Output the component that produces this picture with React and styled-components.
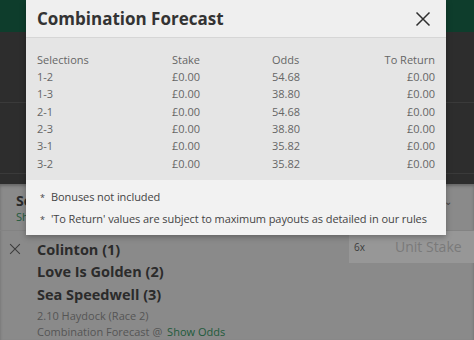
import React from "react"
import styled, { createGlobalStyle } from "styled-components"

const rows = [
  ["1-2", "£0.00", "54.68", "£0.00"],
  ["1-3", "£0.00", "38.80", "£0.00"],
  ["2-1", "£0.00", "54.68", "£0.00"],
  ["2-3", "£0.00", "38.80", "£0.00"],
  ["3-1", "£0.00", "35.82", "£0.00"],
  ["3-2", "£0.00", "35.82", "£0.00"],
]

const CloseIcon = ({ size = 16, color = "#333", width = 1.6 }) => (
  <svg width={size} height={size} viewBox="0 0 16 16">
    <path d="M1.5 1.5 L14.5 14.5 M14.5 1.5 L1.5 14.5" stroke={color} strokeWidth={width} fill="none" />
  </svg>
)

const App = () => {
  return (
    <Page>
      <GlobalStyle />
      <GreenBar />
      <DarkList>
        <DarkRow />
        <DarkRow />
      </DarkList>
      <Slip>
        <SlipHeader>
          <SlipTitle>Se</SlipTitle>
          <SlipLink>Sh</SlipLink>
          <Chevron>⌄</Chevron>
        </SlipHeader>
        <Bet>
          <RemoveBtn>
            <CloseIcon size={12} color="#3c3c3c" width={1.4} />
          </RemoveBtn>
          <BetInfo>
            <Runner>Colinton (1)</Runner>
            <Runner>Love Is Golden (2)</Runner>
            <Runner>Sea Speedwell (3)</Runner>
            <MetaGroup>
              <Meta>2.10 Haydock (Race 2)</Meta>
              <Meta>
                Combination Forecast @ <OddsLink>Show Odds</OddsLink>
              </Meta>
            </MetaGroup>
          </BetInfo>
          <StakeBox>
            <Multiplier>6x</Multiplier>
            <StakeInput>Unit Stake</StakeInput>
          </StakeBox>
        </Bet>
      </Slip>

      <Modal>
        <ModalHeader>
          <ModalTitle>Combination Forecast</ModalTitle>
          <CloseIcon size={16} color="#2f2f2f" width={1.5} />
        </ModalHeader>
        <ModalBody>
          <Table>
            <thead>
              <tr>
                <Th>Selections</Th>
                <Th>Stake</Th>
                <Th>Odds</Th>
                <Th $right>To Return</Th>
              </tr>
            </thead>
            <tbody>
              {rows.map((r) => (
                <tr key={r[0]}>
                  <Td>{r[0]}</Td>
                  <Td>{r[1]}</Td>
                  <Td>{r[2]}</Td>
                  <Td $right>{r[3]}</Td>
                </tr>
              ))}
            </tbody>
          </Table>
        </ModalBody>
        <ModalFooter>
          <Note>
            <Star>*</Star>Bonuses not included
          </Note>
          <Note>
            <Star>*</Star>'To Return' values are subject to maximum payouts as detailed in our rules
          </Note>
        </ModalFooter>
      </Modal>
    </Page>
  )
}

export default App

const GlobalStyle = createGlobalStyle`
  html, body {
    margin: 0;
    padding: 0;
    background: #2d2d2d;
  }
  body {
    font-family: "Open Sans", "Liberation Sans", sans-serif;
  }
`

const Page = styled.div`
  position: relative;
  width: 474px;
  height: 340px;
  overflow: hidden;
  display: flex;
  flex-direction: column;
`

const GreenBar = styled.div`
  height: 32px;
  background: #0e3d2c;
`

const DarkList = styled.div`
  height: 153px;
  background: #2d2d2d;
  display: flex;
  flex-direction: column;
`

const DarkRow = styled.div`
  height: 70px;
  border-bottom: 1px solid #3a3a3a;
`

const Slip = styled.div`
  flex: 1;
  background: #8a8a8a;
  display: flex;
  flex-direction: column;
  box-shadow: inset 0 2px 3px rgba(0, 0, 0, 0.25);
`

const SlipHeader = styled.div`
  position: relative;
  height: 47px;
  padding: 8px 0 0 16px;
  box-sizing: border-box;
  border-bottom: 1px solid #838383;
`

const SlipTitle = styled.div`
  font-size: 14px;
  font-weight: 700;
  color: #2a2a2a;
  line-height: 17px;
`

const SlipLink = styled.div`
  font-size: 11px;
  color: #1f5a3c;
  line-height: 16px;
`

const Chevron = styled.span`
  position: absolute;
  right: 22px;
  top: 10px;
  font-size: 10px;
  color: #444;
`

const Bet = styled.div`
  display: flex;
  align-items: flex-start;
`

const RemoveBtn = styled.div`
  width: 37px;
  padding-top: 12px;
  padding-left: 9px;
  box-sizing: border-box;
  display: flex;
`

const BetInfo = styled.div`
  flex: 1;
  display: flex;
  flex-direction: column;
  padding-top: 8px;
`

const Runner = styled.div`
  font-size: 14.5px;
  font-weight: 700;
  color: #2b2b2b;
  line-height: 22.5px;
`

const MetaGroup = styled.div`
  margin-top: 2px;
`

const Meta = styled.div`
  font-size: 11px;
  color: #555;
  line-height: 16px;
`

const OddsLink = styled.span`
  color: #1e5a3b;
  margin-left: 2px;
`

const StakeBox = styled.div`
  width: 125px;
  height: 32px;
  background: #979797;
  display: flex;
  align-items: center;
  padding-left: 5px;
  box-sizing: border-box;
`

const Multiplier = styled.span`
  font-size: 10px;
  color: #3c3c3c;
  width: 41px;
`

const StakeInput = styled.span`
  font-size: 14px;
  color: #7a7a7a;
`

const Modal = styled.div`
  position: absolute;
  left: 26px;
  top: 0;
  width: 420px;
  background: #f0f0f0;
  box-shadow: 0 2px 6px rgba(0, 0, 0, 0.3);
  display: flex;
  flex-direction: column;
`

const ModalHeader = styled.div`
  height: 37px;
  display: flex;
  align-items: center;
  justify-content: space-between;
  padding: 0 15px 0 11px;
  border-bottom: 1px solid #d6d6d6;
  background: #efefef;
`

const ModalTitle = styled.div`
  font-size: 17px;
  font-weight: 700;
  color: #333;
`

const ModalBody = styled.div`
  background: #e5e5e5;
  padding: 13px 11px 8px 11px;
`

const Table = styled.table`
  width: 100%;
  border-collapse: collapse;
  font-size: 11px;
  color: #666;
`

const Th = styled.th`
  font-weight: 400;
  color: #666;
  text-align: ${(p) => (p.$right ? "right" : "left")};
  padding: 0;
  height: 17px;
  &:nth-child(1) { width: 135px; }
  &:nth-child(2) { width: 100px; }
`

const Td = styled.td`
  color: #666;
  text-align: ${(p) => (p.$right ? "right" : "left")};
  padding: 0;
  height: 17.3px;
`

const ModalFooter = styled.div`
  background: #f2f2f2;
  padding: 6px 14px 4px;
  display: flex;
  flex-direction: column;
`

const Note = styled.div`
  font-size: 11px;
  letter-spacing: -0.08px;
  white-space: nowrap;
  color: #444;
  line-height: 21.5px;
`

const Star = styled.span`
  display: inline-block;
  width: 11px;
  font-size: 9px;
`
